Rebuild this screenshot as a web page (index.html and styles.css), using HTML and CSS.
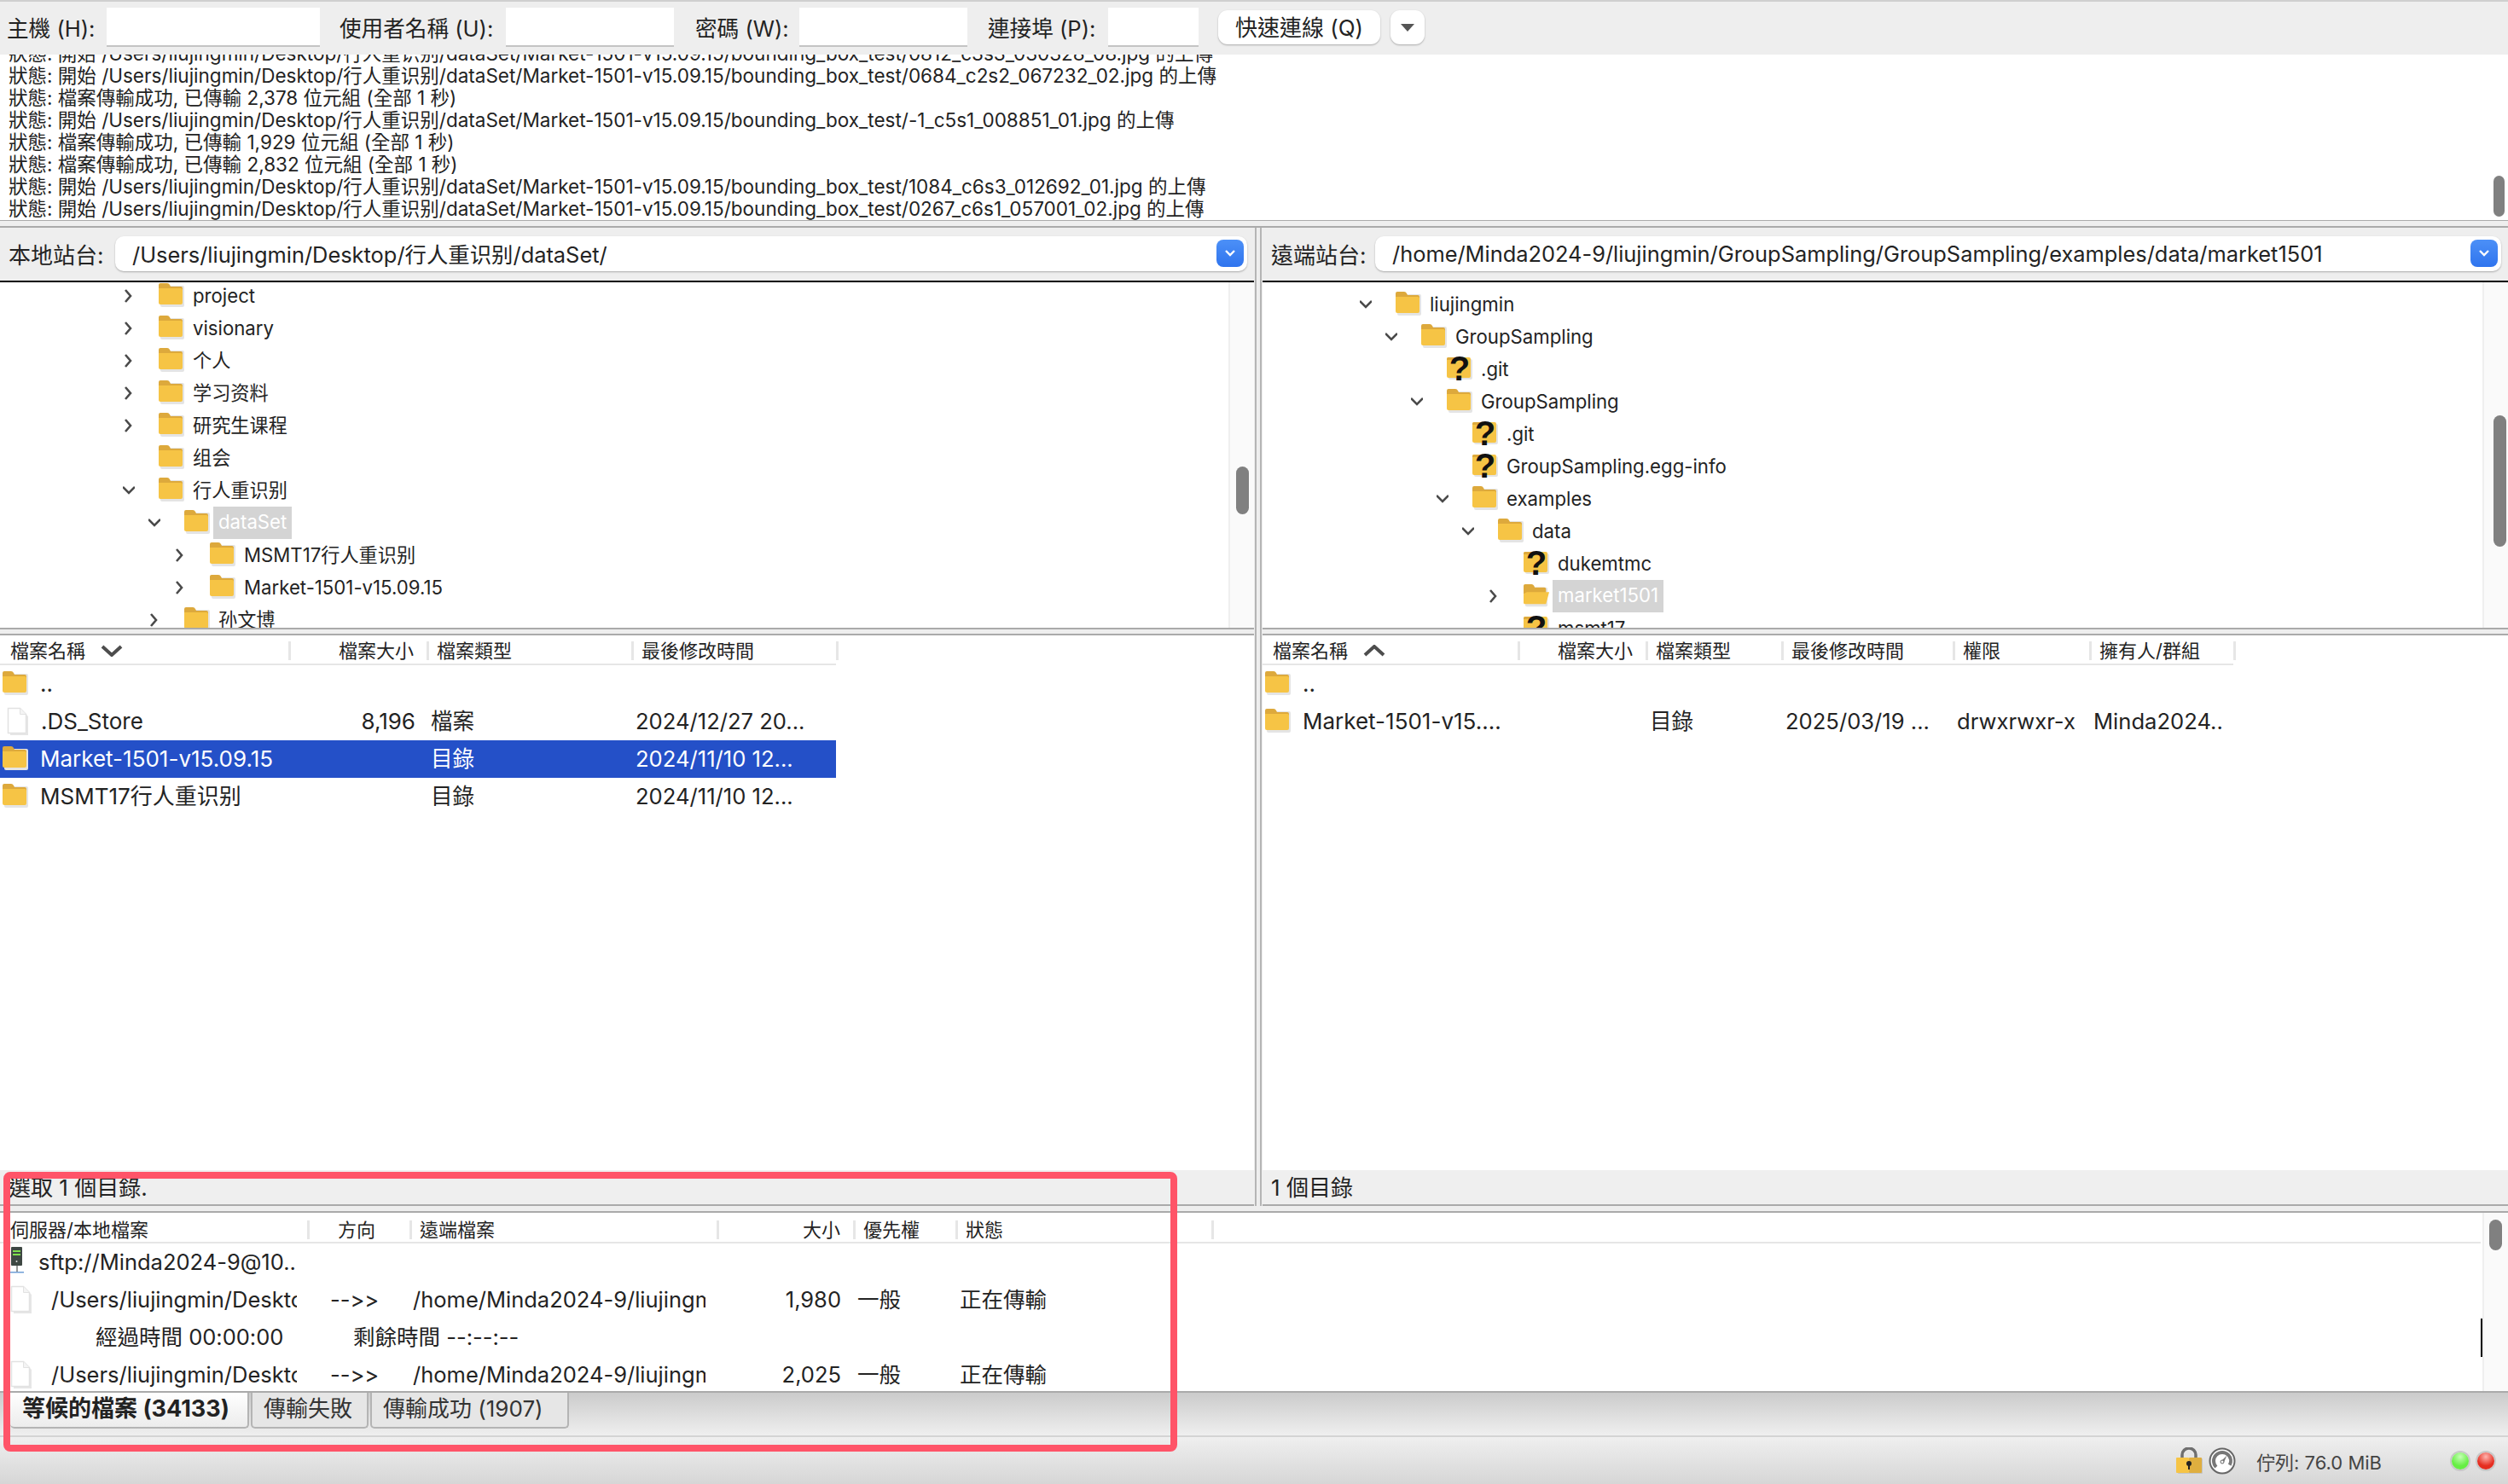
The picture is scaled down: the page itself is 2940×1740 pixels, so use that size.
FILE: index.html
```html
<!DOCTYPE html>
<html lang="zh-Hant">
<head>
    <meta charset="UTF-8">
    <title>FileZilla</title>
    <link rel="stylesheet" href="styles.css">
</head>
<body>
<svg class="defs" aria-hidden="true">
    <symbol id="folder" viewBox="0 0 30 28">
        <rect x="2" y="3" width="28" height="25" rx="2" fill="#e4e4e4"/>
        <path d="M0 2q0-2 2-2h8q2 0 3 2l1 2h12q2 0 2 2v3H0z" fill="#dda93c"/>
        <path d="M0 6h26q2 0 2 2v15q0 2-2 2H2q-2 0-2-2z" fill="#f6c445"/>
    </symbol>
    <symbol id="folder-q" viewBox="0 0 30 36">
        <rect x="2" y="7" width="28" height="24" rx="2" fill="#e4e4e4"/>
        <path d="M0 7q0-2 2-2h24q2 0 2 2v20q0 2-2 2H2q-2 0-2-2z" fill="#f6c445"/>
        <path d="M0 7q0-2 2-2h8l3 3H0z" fill="#dda93c"/>
        <text x="15" y="32" class="q-mark">?</text>
    </symbol>
    <symbol id="folder-open" viewBox="0 0 32 28">
        <rect x="2" y="4" width="28" height="24" rx="2" fill="#e4e4e4"/>
        <path d="M0 2q0-2 2-2h8q2 0 3 2l1 2h12q2 0 2 2v6H0z" fill="#dda93c"/>
        <path d="M0 12l4-2h28l-4 15H2q-2 0-2-2z" fill="#f6c445"/>
    </symbol>
    <symbol id="file" viewBox="0 0 26 34">
        <path d="M4 4h14l7 7v22H4z" fill="#e6e6e6"/>
        <path d="M1.500 1.500h14l7 7v22h-21z" fill="#fff" stroke="#e2e2e2" stroke-width="1.500"/>
        <path d="M15.500 1.500v7h7" fill="#f4f4f4" stroke="#e2e2e2" stroke-width="1"/>
    </symbol>
</svg>

<div class="app">
    <div class="toolbar">
        <label class="tb-label lb-host">主機 (H):</label><div class="tb-input in-host"></div>
        <label class="tb-label lb-user">使用者名稱 (U):</label><div class="tb-input in-user"></div>
        <label class="tb-label lb-pass">密碼 (W):</label><div class="tb-input in-pass"></div>
        <label class="tb-label lb-port">連接埠 (P):</label><div class="tb-input in-port"></div>
        <button class="tb-btn">快速連線 (Q)</button>
        <button class="tb-drop"><span class="tri"></span></button>
    </div>

    <div class="log">
        <div class="log-lines">
            <div>狀態: 開始 /Users/liujingmin/Desktop/行人重识别/dataSet/Market-1501-v15.09.15/bounding_box_test/0812_c3s3_030328_08.jpg 的上傳</div>
            <div>狀態: 開始 /Users/liujingmin/Desktop/行人重识别/dataSet/Market-1501-v15.09.15/bounding_box_test/0684_c2s2_067232_02.jpg 的上傳</div>
            <div>狀態: 檔案傳輸成功, 已傳輸 2,378 位元組 (全部 1 秒)</div>
            <div>狀態: 開始 /Users/liujingmin/Desktop/行人重识别/dataSet/Market-1501-v15.09.15/bounding_box_test/-1_c5s1_008851_01.jpg 的上傳</div>
            <div>狀態: 檔案傳輸成功, 已傳輸 1,929 位元組 (全部 1 秒)</div>
            <div>狀態: 檔案傳輸成功, 已傳輸 2,832 位元組 (全部 1 秒)</div>
            <div>狀態: 開始 /Users/liujingmin/Desktop/行人重识别/dataSet/Market-1501-v15.09.15/bounding_box_test/1084_c6s3_012692_01.jpg 的上傳</div>
            <div>狀態: 開始 /Users/liujingmin/Desktop/行人重识别/dataSet/Market-1501-v15.09.15/bounding_box_test/0267_c6s1_057001_02.jpg 的上傳</div>
        </div>
        <div class="log-thumb"></div>
    </div>
    <div class="hsplit"></div>

    <div class="panes">
        <section class="pane">
            <div class="site-bar">
                <span class="site-label local-label">本地站台:</span>
                <div class="combo local-combo">
                    <span class="combo-text">/Users/liujingmin/Desktop/行人重识别/dataSet/</span>
                    <span class="combo-btn"><svg viewBox="0 0 14 10" width="14" height="10"><path d="M2 2l5 5 5-5" fill="none" stroke="#fff" stroke-width="2.4"/></svg></span>
                </div>
            </div>
            <div class="tree tree-local">
                <div class="tree-rows">
                    <div class="row"><svg class="tw"><path d="M3 2l6 7-6 7"/></svg><svg class="fi"><use href="#folder"/></svg><span>project</span></div>
                    <div class="row"><svg class="tw"><path d="M3 2l6 7-6 7"/></svg><svg class="fi"><use href="#folder"/></svg><span>visionary</span></div>
                    <div class="row"><svg class="tw"><path d="M3 2l6 7-6 7"/></svg><svg class="fi"><use href="#folder"/></svg><span>个人</span></div>
                    <div class="row"><svg class="tw"><path d="M3 2l6 7-6 7"/></svg><svg class="fi"><use href="#folder"/></svg><span>学习资料</span></div>
                    <div class="row"><svg class="tw"><path d="M3 2l6 7-6 7"/></svg><svg class="fi"><use href="#folder"/></svg><span>研究生课程</span></div>
                    <div class="row"><svg class="tw"></svg><svg class="fi"><use href="#folder"/></svg><span>组会</span></div>
                    <div class="row"><svg class="tw"><path d="M0 5l7 7 7-7"/></svg><svg class="fi"><use href="#folder"/></svg><span>行人重识别</span></div>
                    <div class="row d1"><svg class="tw"><path d="M0 5l7 7 7-7"/></svg><svg class="fi"><use href="#folder"/></svg><span class="sel">dataSet</span></div>
                    <div class="row d2"><svg class="tw"><path d="M3 2l6 7-6 7"/></svg><svg class="fi"><use href="#folder"/></svg><span>MSMT17行人重识别</span></div>
                    <div class="row d2"><svg class="tw"><path d="M3 2l6 7-6 7"/></svg><svg class="fi"><use href="#folder"/></svg><span>Market-1501-v15.09.15</span></div>
                    <div class="row d1"><svg class="tw"><path d="M3 2l6 7-6 7"/></svg><svg class="fi"><use href="#folder"/></svg><span>孙文博</span></div>
                </div>
                <div class="vscroll"><div class="thumb"></div></div>
            </div>
            <div class="gap"></div>
            <div class="list list-local">
                <div class="list-head">
                    <div class="th">檔案名稱<svg class="sort" viewBox="0 0 26 14"><path d="M2 2l11 10L24 2"/></svg></div>
                    <div class="th right">檔案大小</div>
                    <div class="th">檔案類型</div>
                    <div class="th">最後修改時間</div>
                </div>
                <div class="lrow"><div class="td name"><svg class="fi"><use href="#folder"/></svg><span class="up">..</span></div></div>
                <div class="lrow"><div class="td name"><svg class="fl"><use href="#file"/></svg>.DS_Store</div><div class="td right">8,196</div><div class="td tp">檔案</div><div class="td tp">2024/12/27 20...</div></div>
                <div class="lrow active"><div class="td name"><svg class="fi"><use href="#folder"/></svg>Market-1501-v15.09.15</div><div class="td right"></div><div class="td tp">目錄</div><div class="td tp">2024/11/10 12...</div></div>
                <div class="lrow"><div class="td name"><svg class="fi"><use href="#folder"/></svg>MSMT17行人重识别</div><div class="td right"></div><div class="td tp">目錄</div><div class="td tp">2024/11/10 12...</div></div>
            </div>
            <div class="pane-status">選取 1 個目錄.</div>
        </section>

        <div class="vsplit"></div>

        <section class="pane">
            <div class="site-bar">
                <span class="site-label remote-label">遠端站台:</span>
                <div class="combo remote-combo">
                    <span class="combo-text">/home/Minda2024-9/liujingmin/GroupSampling/GroupSampling/examples/data/market1501</span>
                    <span class="combo-btn"><svg viewBox="0 0 14 10" width="14" height="10"><path d="M2 2l5 5 5-5" fill="none" stroke="#fff" stroke-width="2.4"/></svg></span>
                </div>
            </div>
            <div class="tree tree-remote">
                <div class="tree-rows">
                    <div class="row"><svg class="tw"><path d="M0 5l7 7 7-7"/></svg><svg class="fi"><use href="#folder"/></svg><span>liujingmin</span></div>
                    <div class="row d1"><svg class="tw"><path d="M0 5l7 7 7-7"/></svg><svg class="fi"><use href="#folder"/></svg><span>GroupSampling</span></div>
                    <div class="row d2"><svg class="tw"></svg><svg class="fq"><use href="#folder-q"/></svg><span>.git</span></div>
                    <div class="row d2"><svg class="tw"><path d="M0 5l7 7 7-7"/></svg><svg class="fi"><use href="#folder"/></svg><span>GroupSampling</span></div>
                    <div class="row d3"><svg class="tw"></svg><svg class="fq"><use href="#folder-q"/></svg><span>.git</span></div>
                    <div class="row d3"><svg class="tw"></svg><svg class="fq"><use href="#folder-q"/></svg><span>GroupSampling.egg-info</span></div>
                    <div class="row d3"><svg class="tw"><path d="M0 5l7 7 7-7"/></svg><svg class="fi"><use href="#folder"/></svg><span>examples</span></div>
                    <div class="row d4"><svg class="tw"><path d="M0 5l7 7 7-7"/></svg><svg class="fi"><use href="#folder"/></svg><span>data</span></div>
                    <div class="row d5"><svg class="tw"></svg><svg class="fq"><use href="#folder-q"/></svg><span>dukemtmc</span></div>
                    <div class="row d5"><svg class="tw"><path d="M3 2l6 7-6 7"/></svg><svg class="fi"><use href="#folder-open"/></svg><span class="sel">market1501</span></div>
                    <div class="row d5"><svg class="tw"></svg><svg class="fq"><use href="#folder-q"/></svg><span>msmt17</span></div>
                </div>
                <div class="vscroll"><div class="thumb"></div></div>
            </div>
            <div class="gap"></div>
            <div class="list list-remote">
                <div class="list-head">
                    <div class="th">檔案名稱<svg class="sort" viewBox="0 0 26 14"><path d="M2 12L13 2l11 10"/></svg></div>
                    <div class="th right">檔案大小</div>
                    <div class="th">檔案類型</div>
                    <div class="th">最後修改時間</div>
                    <div class="th">權限</div>
                    <div class="th">擁有人/群組</div>
                </div>
                <div class="lrow"><div class="td name"><svg class="fi"><use href="#folder"/></svg><span class="up">..</span></div></div>
                <div class="lrow"><div class="td name"><svg class="fi"><use href="#folder"/></svg>Market-1501-v15....</div><div class="td right"></div><div class="td tp">目錄</div><div class="td tp">2025/03/19 ...</div><div class="td tp">drwxrwxr-x</div><div class="td tp">Minda2024..</div></div>
            </div>
            <div class="pane-status">1 個目錄</div>
        </section>
    </div>

    <div class="qsplit"></div>
    <div class="queue">
        <div class="queue-main">
            <div class="qhead">
                <div class="th">伺服器/本地檔案</div>
                <div class="th center">方向</div>
                <div class="th">遠端檔案</div>
                <div class="th right">大小</div>
                <div class="th">優先權</div>
                <div class="th">狀態</div>
            </div>
            <div class="qrow">
                <div class="qc server-cell">
                    <svg class="srv" viewBox="0 0 18 32">
                        <rect x="2" y="0" width="13" height="22" rx="1" fill="#3e4743"/>
                        <rect x="4" y="4" width="9" height="2" fill="#7fe04e"/>
                        <rect x="4" y="8" width="9" height="2" fill="#7fe04e"/>
                        <circle cx="8.500" cy="17" r="1" fill="#ddd"/>
                        <rect x="8" y="22" width="2" height="7" fill="#999"/>
                        <rect x="1" y="29" width="16" height="1.500" fill="#6f9ed6"/>
                    </svg>
                    <span>sftp://Minda2024-9@10..</span>
                </div>
            </div>
            <div class="qrow">
                <div class="qc file-cell"><svg class="fl"><use href="#file"/></svg><span>/Users/liujingmin/Desktop/行人重识别</span></div>
                <div class="qc dir">--&gt;&gt;</div>
                <div class="qc remote-cell">/home/Minda2024-9/liujingmin/GroupSampling</div>
                <div class="qc right">1,980</div>
                <div class="qc prio">一般</div>
                <div class="qc state">正在傳輸</div>
            </div>
            <div class="qrow timing">
                <span class="elapsed">經過時間 00:00:00</span>
                <span>剩餘時間 --:--:--</span>
            </div>
            <div class="qrow">
                <div class="qc file-cell"><svg class="fl"><use href="#file"/></svg><span>/Users/liujingmin/Desktop/行人重识别</span></div>
                <div class="qc dir">--&gt;&gt;</div>
                <div class="qc remote-cell">/home/Minda2024-9/liujingmin/GroupSampling</div>
                <div class="qc right">2,025</div>
                <div class="qc prio">一般</div>
                <div class="qc state">正在傳輸</div>
            </div>
        </div>
        <div class="caret"></div>
        <div class="vscroll"><div class="thumb"></div></div>
    </div>
    <div class="tabs">
        <div class="tab tab-on">等候的檔案 (34133)</div>
        <div class="tab">傳輸失敗</div>
        <div class="tab">傳輸成功 (1907)</div>
    </div>
    <div class="statusbar">
        <svg class="lock" viewBox="0 0 32 32">
            <path d="M7 14V9a8 8 0 0 1 16 0v5" fill="none" stroke="#6f6f6f" stroke-width="3.500"/>
            <rect x="2" y="13" width="29" height="18" rx="1" fill="#c4c4c4"/>
            <rect x="0" y="12" width="15" height="18" rx="1" fill="#f6c445"/>
            <rect x="15" y="12" width="15" height="18" rx="1" fill="#dfae3f"/>
            <circle cx="15" cy="19" r="3" fill="#222"/>
            <rect x="14" y="20" width="2" height="6" fill="#222"/>
        </svg>
        <svg class="gauge" viewBox="0 0 32 32">
            <circle cx="16" cy="16" r="14.500" fill="#fff" stroke="#666" stroke-width="2"/>
            <circle cx="16" cy="16" r="10" fill="none" stroke="#777" stroke-width="4" stroke-dasharray="44 19" transform="rotate(135 16 16)"/>
            <path d="M14.500 16.500l7-7-4 9z" fill="#777"/>
            <circle cx="16" cy="17" r="2" fill="#fff" stroke="#666"/>
        </svg>
        <span class="qsize">佇列: 76.0 MiB</span>
        <span class="led led-green"></span>
        <span class="led led-red"></span>
    </div>

    <div class="highlight"></div>
</div>
</body>
</html>
```

FILE: styles.css
```css
* { box-sizing: border-box; }
html, body { margin: 0; padding: 0; }
body {
    width: 2940px;
    height: 1740px;
    overflow: hidden;
    background: #eee;
    color: #232323;
    font-family: Inter, "Noto Sans CJK TC", sans-serif;
    font-size: 26px;
    font-feature-settings: "calt" 0, "liga" 0;
}
.defs { width: 0; height: 0; display: block; position: absolute; }
.q-mark { font: bold 40px "Liberation Sans", sans-serif; fill: #111; text-anchor: middle; }
.app { position: relative; width: 2940px; height: 1740px; display: flex; flex-direction: column; }

/* quick connect */
.toolbar {
    height: 64px;
    flex: none;
    display: flex;
    align-items: center;
    border-top: 2px solid #cfcfcf;
    background: #eee;
    padding: 0 0 2px 8px;
}
.tb-label { white-space: nowrap; margin-bottom: 2px; font-size: 25.6px; }
.lb-host { width: 117px; }
.lb-user { width: 195px; margin-left: 23px; }
.lb-pass { width: 122px; margin-left: 25px; }
.lb-port { width: 141px; margin-left: 24px; }
.tb-input { height: 46px; background: #fff; border-bottom: 2px solid #c4c4c4; }
.in-host { width: 250px; }
.in-user { width: 197px; }
.in-pass { width: 197px; }
.in-port { width: 106px; }
.tb-btn, .tb-drop {
    height: 40px;
    border: 0;
    border-radius: 11px;
    background: #fff;
    box-shadow: 0 1px 2px #aaa;
    font: inherit;
    color: #232323;
    padding: 0;
}
.tb-btn { width: 190px; margin-left: 23px; padding-bottom: 3px; }
.tb-drop { width: 40px; margin-left: 12px; display: flex; align-items: center; justify-content: center; }
.tri { width: 0; height: 0; border: 8px solid transparent; border-top: 9px solid #555; border-bottom: 0; }

/* message log */
.log {
    height: 195px;
    flex: none;
    display: flex;
    background: #fff;
    border-bottom: 1px solid #aaa;
    overflow: hidden;
}
.log-lines {
    flex: 1;
    display: flex;
    flex-direction: column;
    justify-content: flex-end;
    padding-left: 10px;
    font-size: 22.5px;
    line-height: 26px;
    white-space: nowrap;
}
.log-thumb { width: 13px; height: 48px; margin: 142px 4px 0 0; border-radius: 7px; background: #808080; }
.hsplit { height: 8px; flex: none; border-bottom: 2px solid #aaa; }

/* panes */
.panes { height: 1147px; flex: none; display: grid; grid-template-columns: 1470px 10px 1460px; }
.pane { display: flex; flex-direction: column; min-width: 0; }
.vsplit { margin: 0 1px; border-left: 2px solid #b5b5b5; border-right: 2px solid #b5b5b5; background: #eee; }
.site-bar { height: 64px; flex: none; display: flex; align-items: center; border-bottom: 2px solid #000; padding-bottom: 2px; }
.site-label { white-space: nowrap; }
.local-label { width: 135px; padding-left: 10px; }
.remote-label { width: 132px; padding-left: 10px; }
.combo {
    height: 41px;
    display: flex;
    align-items: center;
    background: #fff;
    border-radius: 10px;
    box-shadow: 0 1px 2px #aaa;
    padding: 0 4px 0 20px;
    font-size: 25.4px;
}
.local-combo { width: 1327px; }
.remote-combo { width: 1320px; }
.combo-text { flex: 1; white-space: nowrap; }
.combo-btn {
    width: 32px;
    height: 32px;
    border-radius: 8px;
    background: linear-gradient(#4c90f7, #2f74ee);
    display: flex;
    align-items: center;
    justify-content: center;
}

/* directory trees */
.tree { height: 407px; flex: none; display: flex; background: #fff; border-bottom: 2px solid #aaa; overflow: hidden; font-size: 22.2px; }
.tree-rows { flex: 1; min-width: 0; overflow: hidden; }
.tree-local { --base: 146px; }
.tree-local .tree-rows { margin-top: -3px; }
.tree-remote { --base: 116px; }
.tree-remote .tree-rows { padding-top: 7px; }
.row { --d: 0; height: 38px; line-height: 36px; display: flex; align-items: center; padding-left: calc(var(--base) + var(--d) * 30px); white-space: nowrap; }
.d1 { --d: 1; }
.d2 { --d: 2; }
.d3 { --d: 3; }
.d4 { --d: 4; }
.d5 { --d: 5; }
.tw { width: 14px; height: 18px; margin: 0 28px 0 -2px; flex: none; }
.tw path { fill: none; stroke: #4a4a4a; stroke-width: 2.600; }
.fi { width: 30px; height: 28px; margin: 0 10px 2px 0; flex: none; }
.fq { width: 30px; height: 36px; margin: 0 10px 2px 0; flex: none; }
.sel { height: 38px; background: #d4d4d4; color: #fff; padding: 0 6px; margin-left: -6px; }
.vscroll { width: 30px; flex: none; background: #fafafa; border-left: 2px solid #efefef; }
.tree-local .vscroll { padding-left: 7px; }
.tree-local .thumb { height: 56px; margin-top: 216px; }
.tree-remote .vscroll { padding-left: 11px; }
.tree-remote .thumb { height: 154px; margin-top: 156px; }
.thumb { width: 15px; border-radius: 8px; background: #808080; }

/* file lists */
.gap { height: 7px; flex: none; border-bottom: 2px solid #aaa; }
.list { flex: 1; min-height: 0; background: #fff; }
.list-head { height: 35px; display: grid; border-bottom: 2px solid #e6e6e6; font-size: 22px; padding-top: 7px; }
.lrow { height: 44px; line-height: 44px; display: grid; white-space: nowrap; align-items: center; }
.list-local .list-head, .list-local .lrow { grid-template-columns: 338px 162px 240px 240px; width: 980px; }
.list-remote .list-head, .list-remote .lrow { grid-template-columns: 299px 150px 159px 201px 160px 169px; width: 1138px; }
.th { height: 22px; line-height: 22px; padding-left: 12px; margin-right: -3px; border-right: 3px solid #e6e6e6; white-space: nowrap; display: flex; align-items: center; }
.th.right { justify-content: flex-end; padding-right: 15px; }
.th.center { justify-content: center; padding: 0 4px 0 0; }
.sort { width: 26px; height: 14px; margin-left: 18px; fill: none; stroke: #4d4d4d; stroke-width: 4; }
.td { min-width: 0; overflow: hidden; }
.name { display: flex; align-items: center; }
.name .fi { margin: 0 14px 2px 3px; flex: none; }
.name .fl { margin: 0 14px 0 8px; }
.fl { width: 26px; height: 34px; flex: none; }
.td.right { text-align: right; padding-right: 13px; }
.td.tp { padding-left: 5px; font-size: 25.6px; }
.up { line-height: 28px; }
.active { background: #2450c8; color: #fff; }
.pane-status { height: 42px; flex: none; border-bottom: 2px solid #aaa; background: #efefef; padding-left: 10px; line-height: 42px; }

/* queue */
.qsplit { height: 8px; flex: none; border-bottom: 2px solid #aaa; }
.queue { height: 211px; flex: none; display: flex; background: #fff; border-bottom: 2px solid #aaa; font-size: 25.5px; }
.queue-main { flex: 1; min-width: 0; overflow: hidden; }
.qhead {
    height: 36px;
    display: grid;
    grid-template-columns: 360px 120px 360px 160px 120px 300px 1490px;
    border-bottom: 2px solid #e6e6e6;
    font-size: 22px;
    padding-top: 9px;
}
.qrow {
    height: 44px;
    line-height: 44px;
    display: grid;
    grid-template-columns: 360px 120px 360px 160px 120px 300px;
    align-items: center;
    white-space: nowrap;
}
.qc { min-width: 0; overflow: hidden; }
.server-cell { display: flex; align-items: center; overflow: visible; }
.srv { width: 18px; height: 32px; margin: 0 16px 4px 11px; flex: none; }
.file-cell { display: flex; align-items: center; margin-right: 12px; }
.file-cell .fl { margin-right: 22px; margin-left: 12px; }
.file-cell span { overflow: hidden; }
.dir { padding-left: 27px; }
.remote-cell { margin-left: 4px; margin-right: 13px; }
.qc.right { text-align: right; padding-right: 14px; }
.prio { padding-left: 5px; }
.state { padding-left: 5px; }
.timing { display: flex; padding-left: 112px; }
.elapsed { width: 302px; }
.caret { width: 2px; height: 45px; margin-top: 124px; background: #000; flex: none; }
.queue .vscroll { padding-left: 6px; }
.queue .thumb { height: 36px; margin-top: 8px; }

/* tabs and status */
.tabs {
    height: 52px;
    flex: none;
    display: flex;
    padding-left: 12px;
    gap: 2px;
    background: linear-gradient(#cbcbcb, #efefef);
    border-bottom: 2px solid #d4d4d4;
    align-items: flex-start;
}
.tab {
    height: 42px;
    padding: 0 12px 0 13px;
    line-height: 38px;
    color: #333;
    white-space: nowrap;
    background: #e6e6e6;
    border: 2px solid #b4b4b4;
    border-top: 0;
    border-radius: 0 0 5px 5px;
}
.tab:nth-child(1) { width: 280px; padding-left: 14px; }
.tab:nth-child(2) { width: 138px; }
.tab:nth-child(3) { width: 233px; }
.tab-on {
    font-weight: bold;
    font-size: 27px;
    color: #222;
    background: linear-gradient(#fff, #ececec);
    border-left: 0;
}
.statusbar {
    flex: 1;
    display: flex;
    align-items: center;
    padding: 0 16px 0 0;
    justify-content: flex-end;
    background: linear-gradient(#efefef, #d6d6d6);
}
.lock { width: 32px; height: 32px; }
.gauge { width: 32px; height: 32px; margin-left: 6px; }
.qsize { font-size: 22px; color: #444; margin-left: 24px; width: 229px; white-space: nowrap; }
.led { width: 20px; height: 20px; border-radius: 50%; box-shadow: 0 0 0 2px #c8c8c8; }
.led-green { background: radial-gradient(circle at 50% 25%, #c5ffb5, #66ee44 60%); }
.led-red { background: radial-gradient(circle at 50% 25%, #ffb5b0, #e52d20 60%); margin-left: 10px; }

/* red annotation drawn over the screenshot */
.highlight {
    position: absolute;
    left: 4px;
    top: 1374px;
    width: 1376px;
    height: 328px;
    border: 8px solid #ff5468;
    border-radius: 8px;
}
```
